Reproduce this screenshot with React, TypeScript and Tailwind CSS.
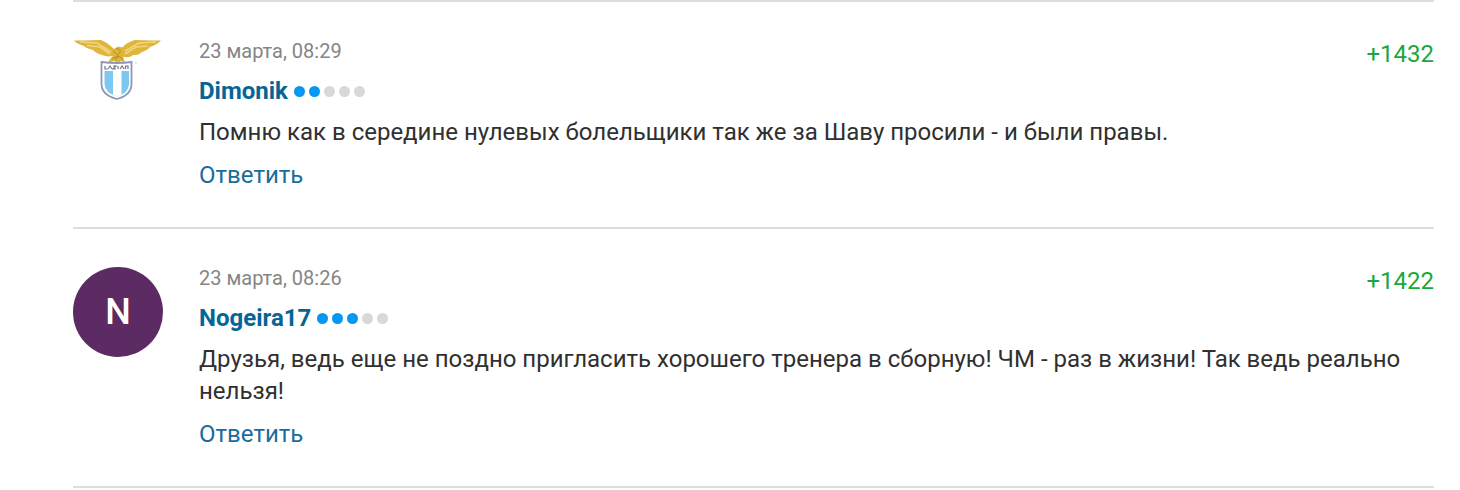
import type { ReactNode } from "react";

type Comment = {
  id: number;
  author: string;
  date: string;
  level: number;
  text: string;
  score: string;
  avatar: ReactNode;
};

const EagleCrest = () => (
  <svg viewBox="0 2 90 64" className="block w-full" aria-hidden="true">
    <path
      d="M1 2.5 L10 2.5 L28 2 C33 4 37 7 41 11 L44 9 C46 8 49 10 50 9 C53 5 58 3 62 2 L80 2.5 L88 2.5 C85 6 80 8 77 9 C75 12 71 13 69 14 C66 17 63 17 60 17 C57 20 53 19 50 19 L52 24.5 L48 23 L45 25 L41 23 L35 25 L37 21 L40 18 C35 19 32 18 29 17 C25 16 22 14 20 12 C15 11 12 9 11 8 C7 7 3 5 1 2.5Z"
      fill="#dfb53c"
    />
    <path
      d="M7 4 L24 5 L38 14 M14 7.5 L27 9 L37 16 M83 4 L66 5 L52 13 M75 8 L63 9 L52 16"
      fill="none"
      stroke="#f1d67a"
      strokeWidth="1.6"
    />
    <path
      d="M40 13 L46 18 L42 22 M43 11 C47 10 49 14 45 16 M39 21 L45 18 L50 21"
      fill="none"
      stroke="#b98a22"
      strokeWidth="1"
    />
    <path
      d="M28.5 24 Q44 26 58.500 24 V45 Q59 57 44 61 Q28 57 28.5 45Z"
      fill="#fff"
      stroke="#8f98b6"
      strokeWidth="1.8"
    />
    <path d="M31.5 33 H56 V46 Q56 55 44 58.500 Q32 55 31.500 46Z" fill="#7cc8f0" />
    <path d="M40 32 H48.500 V57 L44 58.500 L40 57Z" fill="#fff" />
    <path
      d="M32 28 V31 H34.500 M35 31 L37 28 L39 31 M40 28 H43 L40 31 H43 M45 28 V31 M47 31 L49 28 L51 31 M52.500 31 V28 H55 V31"
      fill="none"
      stroke="#6e7794"
      strokeWidth="1.200"
    />
    <circle cx="63" cy="25" r="1" fill="#c5e5f5" />
  </svg>
);

const comments: Comment[] = [
  {
    id: 1,
    author: "Dimonik",
    date: "23 марта, 08:29",
    level: 2,
    text: "Помню как в середине нулевых болельщики так же за Шаву просили - и были правы.",
    score: "+1432",
    avatar: <EagleCrest />,
  },
  {
    id: 2,
    author: "Nogeira17",
    date: "23 марта, 08:26",
    level: 3,
    text: "Друзья, ведь еще не поздно пригласить хорошего тренера в сборную! ЧМ - раз в жизни! Так ведь реально нельзя!",
    score: "+1422",
    avatar: (
      <div className="flex aspect-square items-center justify-center rounded-full bg-[#5c2b63] text-4xl font-medium text-white">
        N
      </div>
    ),
  },
];

const Level = ({ value }: { value: number }) => (
  <span className="flex gap-1" role="img" aria-label={`${value} / 5`}>
    {[1, 2, 3, 4, 5].map((n) => (
      <span
        key={n}
        className={
          n <= value
            ? "size-[11px] rounded-full bg-[#0598f3]"
            : "size-[11px] rounded-full bg-[#d8d8d8]"
        }
      />
    ))}
  </span>
);

const CommentItem = ({ comment }: { comment: Comment }) => (
  <li className="flex border-t-2 border-[#dedede] pt-9 pb-[37px]">
    <div className="mt-0.5 mr-9 w-[90px] shrink-0">{comment.avatar}</div>
    <div className="min-w-0 flex-1">
      <div className="flex items-start justify-between">
        <div>
          <time className="block text-xl leading-[26px] text-[#858585]">
            {comment.date}
          </time>
          <div className="mt-3 flex items-center gap-1.5">
            <a
              href="#"
              className="text-2xl leading-[30px] font-bold text-[#056594]"
            >
              {comment.author}
            </a>
            <Level value={comment.level} />
          </div>
        </div>
        <span className="text-2xl leading-8 text-[#18a83c]">
          {comment.score}
        </span>
      </div>
      <p className="mt-2.5 text-2xl leading-8 text-[#303030]">{comment.text}</p>
      <button
        type="button"
        className="mt-3 block text-2xl leading-[30px] text-[#1a6c9c]"
      >
        Ответить
      </button>
    </div>
  </li>
);

const App = () => (
  <main className="bg-white pr-[26px] pl-[73px] font-['Roboto',sans-serif]">
    <ul className="border-b-2 border-[#dedede]">
      {comments.map((comment) => (
        <CommentItem key={comment.id} comment={comment} />
      ))}
    </ul>
  </main>
);

export default App;
